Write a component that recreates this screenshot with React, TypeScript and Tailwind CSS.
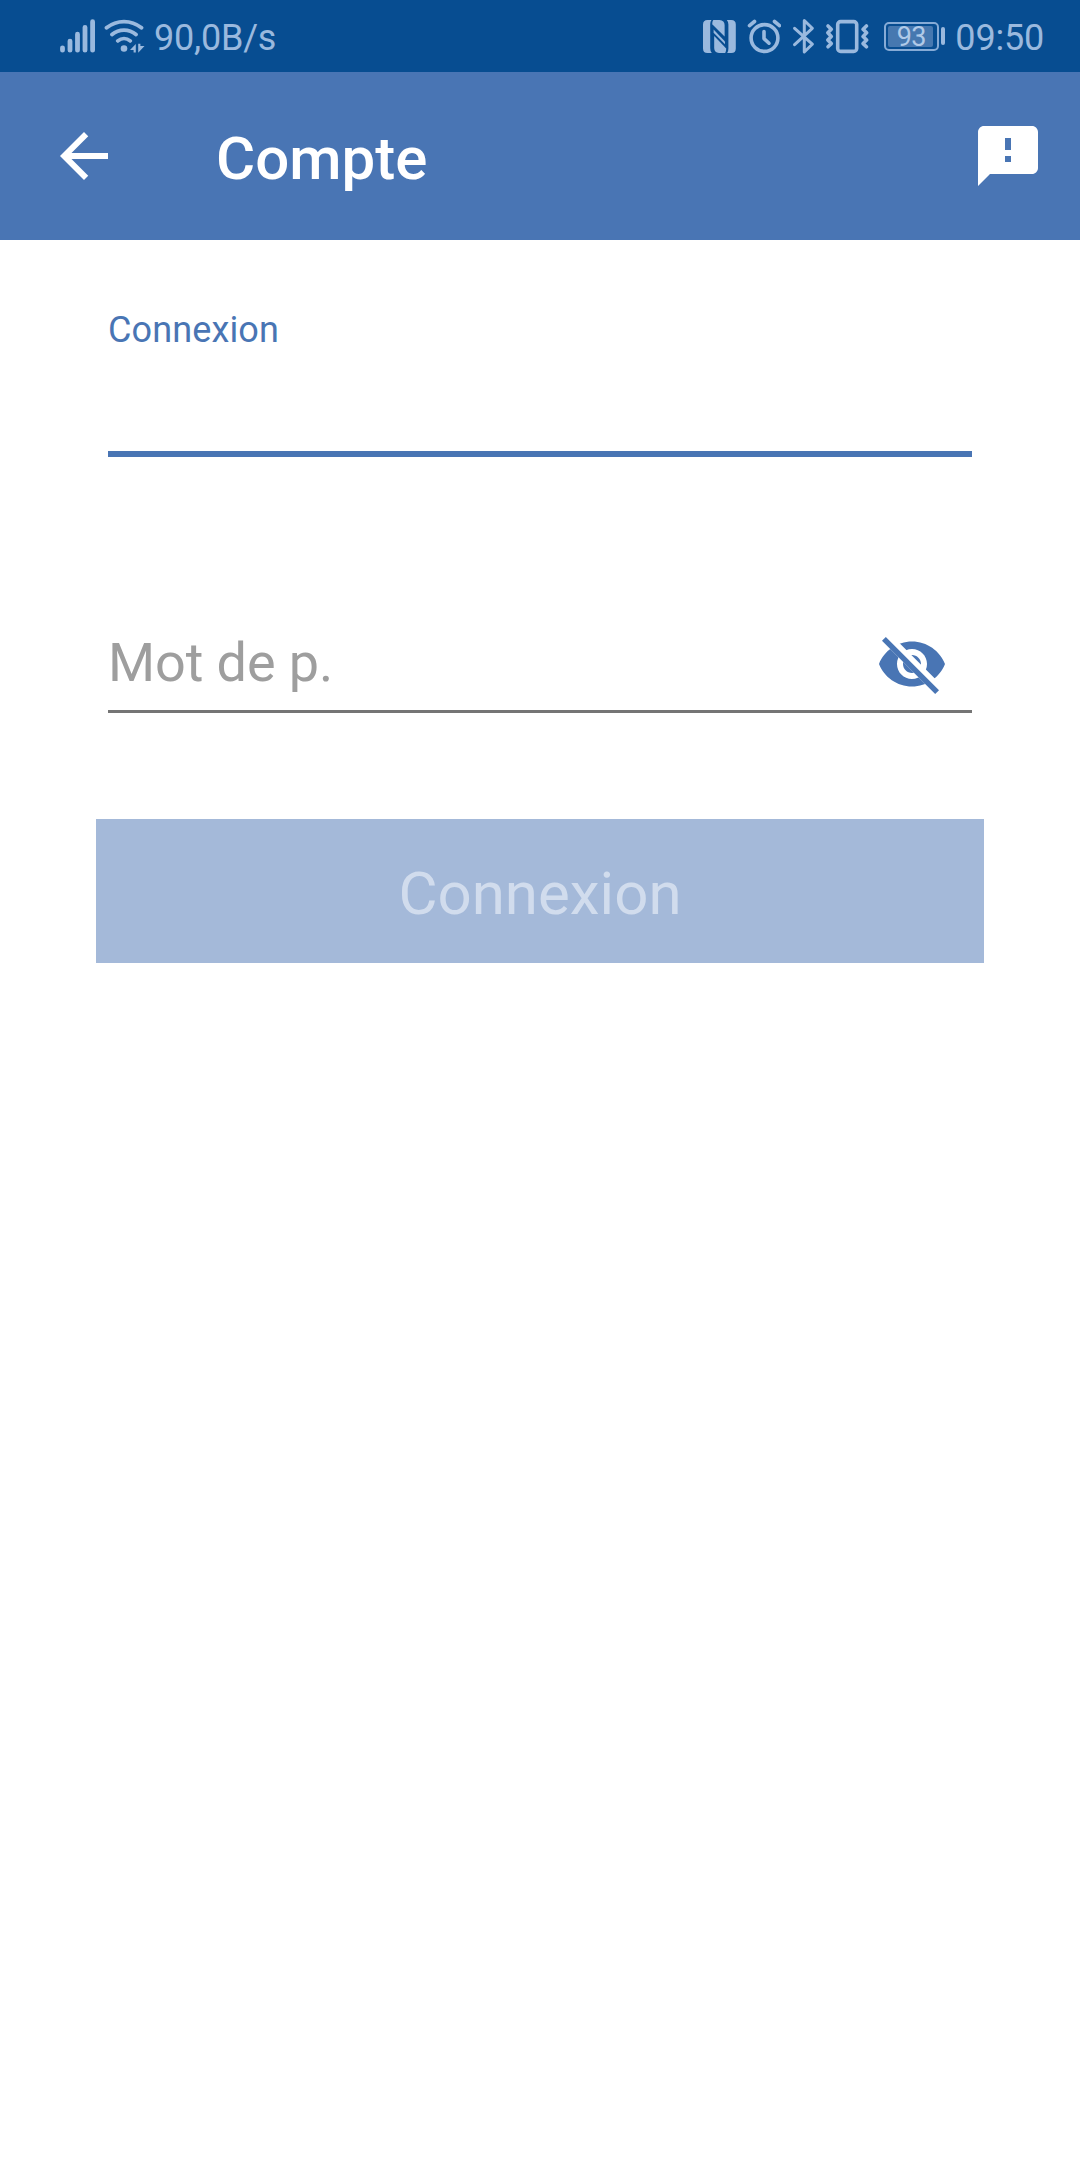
const EYE =
  'M12,4.5C7,4.5 2.73,7.61 1,12C2.73,16.39 7,19.5 12,19.5C17,19.5 21.27,16.39 23,12C21.27,7.61 17,4.5 12,4.5zM12,17C9.24,17 7,14.76 7,12C7,9.24 9.24,7 12,7C14.76,7 17,9.24 17,12C17,14.76 14.76,17 12,17zM12,9C10.34,9 9,10.34 9,12C9,13.66 10.34,15 12,15C13.66,15 15,13.66 15,12C15,10.34 13.66,9 12,9z';

function SignalIcon() {
  return (
    <svg className="h-[34px] w-[36px]" viewBox="60 18.5 36 34" fill="none" stroke="currentColor" strokeWidth="4.8" strokeLinecap="round">
      <path d="M62.5 47.3V49.7M70 40.6V49.7M77.5 33.7V49.7M85 26.8V49.7M92.6 21.2V49.7" />
    </svg>
  );
}

function WifiIcon() {
  return (
    <svg className="ml-[8px] h-[34px] w-[42px]" viewBox="104 18.5 42 34" fill="none" stroke="currentColor" strokeWidth="3.8" strokeLinecap="round">
      <path d="M106.5 27.3C117 19 131 19 141.5 27.3M112 34C119 28.2 129 28.2 136 34M117.8 40.4C121.5 37.3 126.5 37.3 130.2 40.4" />
      <circle cx="124" cy="48" r="3.3" fill="currentColor" stroke="none" />
      <path d="M135.8 43.5V52H133.6V49.6H130zM138.2 43.3H140.4V45.4H144.5L138.2 52.2z" fill="currentColor" stroke="none" />
    </svg>
  );
}

function NfcIcon() {
  return (
    <svg className="h-[36px] w-[34px]" viewBox="702 18 34 36" fill="currentColor">
      <path d="M711.5 20H707.5Q703 20 703 24.5V48.5Q703 53 707.5 53H711.8Q710.2 51.5 710.2 48V24Q710.2 21.5 711.5 20z" />
      <path d="M713.3 20H719.5Q724.6 20.4 724.6 25V36.5L712.2 24.2Q712.2 21.5 713.3 20z" />
      <path d="M713.6 29.5L725 41.5V44.2L713.6 32.8z" />
      <path d="M714.2 36L726.2 48.5Q726.2 51.5 725.2 53H719Q714.2 52.6 714.2 48z" />
      <path d="M726.8 20H731.3Q735.8 20 735.8 24.5V48.5Q735.8 53 731.3 53H727.2Q728.4 51.5 728.4 48.5V24.5Q728.4 21.5 726.8 20z" />
    </svg>
  );
}

function AlarmIcon() {
  return (
    <svg className="ml-[11px] h-[36px] w-[34px]" viewBox="747 18 34 36" fill="none" stroke="currentColor" strokeWidth="3.6" strokeLinecap="round" strokeLinejoin="round">
      <circle cx="764.5" cy="38" r="13.4" />
      <path d="M764 31.5V38.6L769 43.2" />
      <path d="M749.5 25.7L754.5 21.5M779.5 25.7L774.5 21.5" />
    </svg>
  );
}

function BluetoothIcon() {
  return (
    <svg className="ml-[11px] h-[36px] w-[24px]" viewBox="792 18 24 36" fill="none" stroke="currentColor" strokeWidth="3" strokeLinecap="round" strokeLinejoin="round">
      <path d="M794.6 28.3L812.3 44.2L804.3 52V20.5L812.3 28.3L794.6 44.7" />
    </svg>
  );
}

function VibrateIcon() {
  return (
    <svg className="ml-[9px] h-[36px] w-[44px]" viewBox="825 18 44 36" fill="none" stroke="currentColor" strokeWidth="3.6" strokeLinecap="round" strokeLinejoin="round">
      <rect x="837.7" y="21.6" width="19" height="29.8" rx="3" />
      <path d="M828 26L831.3 29.2L827.8 32.8L831.3 36.4L827.8 40L831.3 43.6L828 46.8" />
      <path d="M866.4 26L863.1 29.2L866.6 32.8L863.1 36.4L866.6 40L863.1 43.6L866.4 46.8" />
    </svg>
  );
}

function Battery() {
  return (
    <div className="ml-[15px] flex items-center gap-[2px]">
      <div className="h-[29px] w-[55px] rounded-[5px] border-2 border-[#86abd6] p-[2px]">
        <div className="flex h-full w-[45px] items-center justify-center rounded-[2px] bg-[#4678b0] text-[27px] leading-none tracking-[-0.5px] text-[#b0cae8]">
          <span className="mt-[3px] ml-[1px]">93</span>
        </div>
      </div>
      <div className="h-[18px] w-[4px] rounded-[2px] bg-[#9ab9de]" />
    </div>
  );
}

function StatusBar() {
  return (
    <div className="flex h-[72px] items-center justify-between bg-[#074d91] pr-[36px] pl-[60px] text-[36px] leading-none text-[#9ab9de]">
      <div className="flex items-center">
        <SignalIcon />
        <WifiIcon />
        <span className="mt-[4px] ml-[8px] tracking-[-0.2px]">90,0B/s</span>
      </div>
      <div className="flex items-center">
        <NfcIcon />
        <AlarmIcon />
        <BluetoothIcon />
        <VibrateIcon />
        <Battery />
        <span className="mt-[4px] ml-[10px] tracking-[-0.2px]">09:50</span>
      </div>
    </div>
  );
}

function AppBar() {
  return (
    <header className="flex h-[168px] items-center bg-[#4975b4] pr-[36px] pl-[48px] text-white">
      <button aria-label="Retour">
        <svg className="size-[72px]" viewBox="0 0 24 24" fill="currentColor">
          <path d="M20 11H7.83l5.59-5.59L12 4l-8 8 8 8 1.41-1.41L7.83 13H20v-2z" />
        </svg>
      </button>
      <h1 className="mt-[5px] ml-[96px] flex-1 text-[60px] leading-none font-medium">Compte</h1>
      <button aria-label="Commentaires">
        <svg className="size-[72px]" viewBox="0 0 24 24" fill="currentColor">
          <path d="M20 2H4c-1.1 0-1.99.9-1.99 2L2 22l4-4h14c1.1 0 2-.9 2-2V4c0-1.1-.9-2-2-2zm-7 12h-2v-2h2v2zm0-4h-2V6h2v4z" />
        </svg>
      </button>
    </header>
  );
}

export default function App() {
  return (
    <div className="flex h-[2160px] w-[1080px] flex-col bg-white font-['Roboto',sans-serif]">
      <StatusBar />
      <AppBar />
      <main className="flex flex-col px-[96px]">
        <div className="mx-[12px] flex h-[217px] flex-col border-b-[6px] border-[#4975b4] pt-[72px]">
          <label className="text-[36px] leading-none tracking-[0.12px] text-[#4975b4]">Connexion</label>
        </div>
        <div className="mx-[12px] mt-[171px] flex h-[85px] justify-between border-b-[3px] border-[#757575] pr-[24px]">
          <span className="mt-[8px] text-[54px] leading-none tracking-[-0.1px] text-[#9e9e9e]">Mot de p.</span>
          <button aria-label="Afficher le mot de passe" className="size-[72px] text-[#4975b4]">
            <svg className="size-[72px]" viewBox="0 0 24 24" fill="currentColor">
              <clipPath id="strike">
                <path d="M2,4.27L19.73,22L22.27,19.46L4.54,1.73V1H23V23H1V4.27z" />
              </clipPath>
              <path d={EYE} clipPath="url(#strike)" fillRule="evenodd" />
              <path d="M2,4.27L19.73,22L21,20.73L3.27,3z" />
            </svg>
          </button>
        </div>
        <button className="mt-[106px] flex h-[144px] items-center justify-center bg-[#a4b9d9] pt-[5px] text-[60px] leading-none text-[#d1dced]">
          Connexion
        </button>
      </main>
    </div>
  );
}
